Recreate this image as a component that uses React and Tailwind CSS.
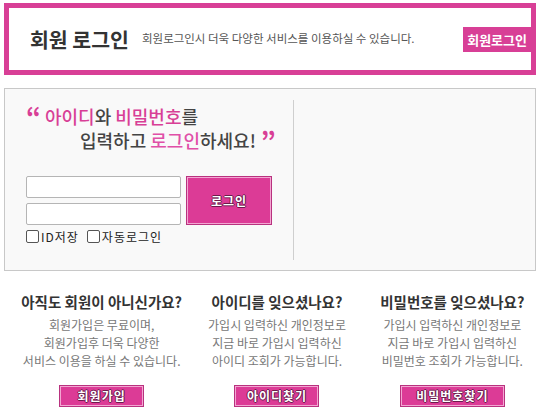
import React from "react";

const FONT = { fontFamily: '"Noto Sans CJK KR", "Noto Sans", sans-serif' };

function PinkButton({ children, w, h, text = "text-[12px]" }) {
  return (
    <div
      className={`${w} ${h} border border-[#b8327f] bg-[#dc3b96] p-0`}
    >
      <div className="w-full h-full border border-[#f3a6d2] flex items-center justify-center">
        <span
          className={`${text} font-bold text-white tracking-[1px] leading-none`}
          style={{ textShadow: "1px 0 #6b1c4c, -1px 0 #6b1c4c, 0 1px #6b1c4c, 0 -1px #6b1c4c" }}
        >
          {children}
        </span>
      </div>
    </div>
  );
}

function Checkbox({ label }) {
  return (
    <div className="flex items-center">
      <div className="w-[13px] h-[13px] border border-[#555] rounded-[2px] bg-white" />
      <span className="ml-[2px] text-[12px] leading-none text-[#222] tracking-[1px]">{label}</span>
    </div>
  );
}

function InfoCol({ title, lines, btn, btnW }) {
  return (
    <div className="w-[176px] flex flex-col items-center">
      <div className="text-[14.5px] font-bold text-[#333] leading-[18px] whitespace-nowrap">{title}</div>
      <div className="mt-[5px] text-[12px] text-[#777] leading-[18px] text-center whitespace-nowrap">
        {lines.map((l, i) => (
          <div key={i}>{l}</div>
        ))}
      </div>
      <div className="mt-[15px]">
        <PinkButton w={btnW} h="h-[22px]">{btn}</PinkButton>
      </div>
    </div>
  );
}

export default function App() {
  return (
    <div className="w-[540px] h-[414px] bg-white overflow-hidden" style={FONT}>
      {/* Top banner */}
      <div className="mt-[3px] mx-[4px] h-[72px] border-[5px] border-[#d83f96] flex items-center">
        <div className="pl-[21px] text-[20.5px] font-bold text-[#333] leading-none">회원 로그인</div>
        <div className="ml-[13px] text-[11.5px] text-[#555] leading-none">
          회원로그인시 더욱 다양한 서비스를 이용하실 수 있습니다.
        </div>
        <div className="ml-auto h-[25px] px-[4px] bg-[#d83f96] flex items-center text-[13px] font-bold text-white leading-none">
          회원로그인
        </div>
      </div>

      {/* Login box */}
      <div className="mt-[13px] mx-[4px] h-[183px] border border-[#c8c8c8] bg-[#f9f9f9] flex items-center">
        <div className="w-[288px] h-full pl-[21px] pt-[15px]">
          <div className="relative h-[62px]">
            <div className="flex items-start">
              <span className="text-[26px] font-bold text-[#d83f96] leading-[24px] mr-[4px]">“</span>
              <span className="text-[18px] font-medium text-[#444] leading-[24px] whitespace-nowrap">
                <span className="text-[#d83f96]">아이디</span>와 <span className="text-[#d83f96]">비밀번호</span>를
              </span>
            </div>
            <div className="flex items-start pl-[54px]">
              <span className="text-[18px] font-medium text-[#444] leading-[24px] whitespace-nowrap">
                입력하고 <span className="text-[#e04fa8]">로그인</span>하세요!
              </span>
              <span className="text-[26px] font-bold text-[#d83f96] leading-[24px] ml-[5px]">”</span>
            </div>
          </div>
          <div className="flex mt-[10px]">
            <div className="flex flex-col gap-[5px]">
              <div className="w-[155px] h-[22px] border border-[#b5b5b5] rounded-[2px] bg-white" />
              <div className="w-[155px] h-[22px] border border-[#b5b5b5] rounded-[2px] bg-white" />
            </div>
            <div className="ml-[5px]">
              <PinkButton w="w-[86px]" h="h-[49px]" text="text-[12px]">로그인</PinkButton>
            </div>
          </div>
          <div className="flex items-center gap-[8px] mt-[5px]">
            <Checkbox label="ID저장" />
            <Checkbox label="자동로그인" />
          </div>
        </div>
        <div className="w-px h-[160px] bg-[#cfcfcf]" />
      </div>

      {/* Bottom info */}
      <div className="flex pl-[14px] pt-[22px]">
        <InfoCol
          title="아직도 회원이 아니신가요?"
          lines={["회원가입은 무료이며,", "회원가입후 더욱 다양한", "서비스 이용을 하실 수 있습니다."]}
          btn="회원가입"
          btnW="w-[85px]"
        />
        <InfoCol
          title="아이디를 잊으셨나요?"
          lines={["가입시 입력하신 개인정보로", "지금 바로 가입시 입력하신", "아이디 조회가 가능합니다."]}
          btn="아이디찾기"
          btnW="w-[85px]"
        />
        <InfoCol
          title="비밀번호를 잊으셨나요?"
          lines={["가입시 입력하신 개인정보로", "지금 바로 가입시 입력하신", "비밀번호 조회가 가능합니다."]}
          btn="비밀번호찾기"
          btnW="w-[105px]"
        />
      </div>
    </div>
  );
}
